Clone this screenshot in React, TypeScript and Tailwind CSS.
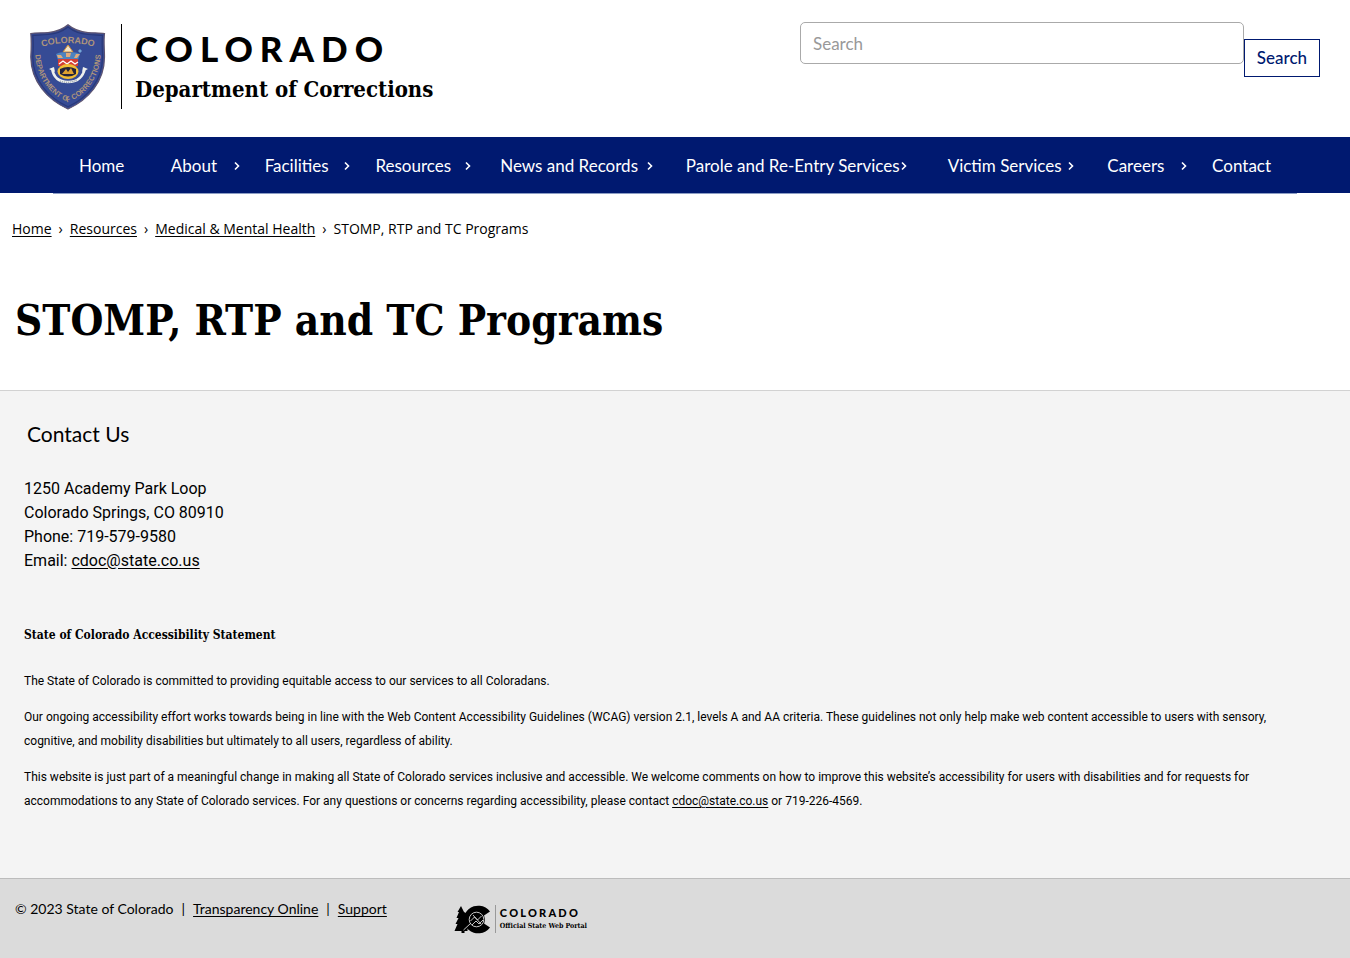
const navItems = [
  { label: 'Home', pad: '' },
  { label: 'About', menu: true, pad: 'pr-6' },
  { label: 'Facilities', menu: true, pad: 'pr-6' },
  { label: 'Resources', menu: true, pad: 'pr-7' },
  { label: 'News and Records', menu: true, pad: 'pr-8' },
  { label: 'Parole and Re-Entry Services', menu: true, pad: 'pr-10' },
  { label: 'Victim Services', menu: true, pad: 'pr-8' },
  { label: 'Careers', menu: true, pad: 'pr-6' },
  { label: 'Contact', pad: '' },
];

function Chevron() {
  return (
    <svg width="8" height="10" viewBox="0 0 8 10" fill="none" stroke="currentColor" strokeWidth="1.6" className="shrink-0" aria-hidden="true">
      <path d="M2 1.5 5.5 5 2 8.5" />
    </svg>
  );
}

function Shield() {
  return (
    <svg width="76" height="86" viewBox="0 0 76 86" className="shrink-0" aria-hidden="true">
      <path
        d="M38 0.8C43 5 51 8 58 8.600C64 9 70 9 74.500 9.500C73.500 17 74.500 25 74.500 33C74.500 58 58 76 38 85C18 76 1 58 0.800 33C1.300 25 1.500 17 0.800 9.500C6 9 12 9 18 8.600C25 8 33 5 38 0.800Z"
        fill="#364b95"
        stroke="#5d536f"
        strokeWidth="1.200"
      />
      <path
        d="M38 3C43 7 51 10 58 10.500C63 11 68 11 72.500 11.300C71.700 18 72.500 26 72.500 33C72.500 57 57 74 38 82.800C19 74 3 57 2.800 33C3.300 26 3.500 18 2.800 11.300C8 11 13 11 18 10.500C25 10 33 7 38 3Z"
        fill="none"
        stroke="#2a3979"
        strokeWidth="1.200"
      />
      <defs>
        <path id="crest-top" d="M8 24Q38 14 68 24" />
        <path id="crest-side" d="M5 24C5 56 22 72 38 78C54 72 71 56 71 24" />
      </defs>
      <g fill="#ae947b" fontFamily="Liberation Sans" fontSize="9" fontWeight="bold">
        <text textAnchor="middle">
          <textPath href="#crest-top" startOffset="50%">COLORADO</textPath>
        </text>
        <text fontSize="7.500" textAnchor="middle">
          <textPath href="#crest-side" startOffset="50%">DEPARTMENT OF CORRECTIONS</textPath>
        </text>
      </g>
      <path d="M38 21 43 28H33Z" fill="#f2e4c4" stroke="#d29036" strokeWidth="1" />
      <path d="M26 30Q31 27 38 29Q45 27 50 30L48 36H28Z" fill="#4d83c0" />
      <path d="M27 31h4l2 3h-5zM36 29h5l-1 4h-4zM46 30h4l-3 4h-3z" fill="#e0ac7c" />
      <path d="M50 25l2 2-2 2-2-2z" fill="#75a7d8" />
      <path d="M28 35H48V42H28Z" fill="#d33e35" />
      <path d="M29 40l4-3 4 3 4-3 4 3 3-2" fill="none" stroke="#fff" strokeWidth="1.300" />
      <ellipse cx="38" cy="47.500" rx="10.500" ry="7.500" fill="#f0bd36" />
      <path d="M30 45Q38 41 46 45V50Q38 55 30 50Z" fill="#25243a" />
      <path d="M32 50l4-5 2 3 3-4 3 6z" fill="#dfa12f" />
      <path d="M22 44Q24 58 38 58Q52 58 55 44" fill="none" stroke="#eef0ed" strokeWidth="2.500" />
      <path d="M19 45l5-2 1 5zM58 45l-5-2-1 5z" fill="#eef0ed" />
      <path d="M30 57Q38 60 47 56" fill="none" stroke="#6d7890" strokeWidth="1" strokeDasharray="1 1" />
    </svg>
  );
}

function PortalMark() {
  return (
    <svg width="38" height="30" viewBox="0 0 38 30" className="shrink-0" aria-hidden="true">
      <path d="M7 1 3.500 7h1.500L2.500 13h2L1.500 19h2L0.500 26h7v2h3v-2h3V9L10 7z" fill="#000" />
      <path
        d="M36 6.500A14.500 13.800 0 1 0 36 22.500L30 18.500A7.500 7.500 0 0 1 30 10.500Z"
        fill="#000"
      />
      <circle cx="23" cy="14.500" r="8" fill="#000" />
      <g fill="none" stroke="#dbdbdb" strokeWidth="0.900">
        <circle cx="22.500" cy="14.500" r="7.300" />
        <path d="M9.500 25 17 18M16.500 16 20.500 12l3 3 4-4M18 20l4-4 3 3 4-4M19 10l8 9" />
      </g>
    </svg>
  );
}

const link = 'underline underline-offset-2';

export default function App() {
  return (
    <div className="min-h-screen bg-white font-['Lato','Liberation_Sans',sans-serif] text-black">
      <header className="flex h-[137px] items-start justify-between px-[30px]">
        <a href="#home" className="flex pt-6" aria-label="Colorado Department of Corrections">
          <Shield />
          <span className="ml-[15px] flex h-[85px] flex-col border-l border-black pl-[13px]">
            <span className="mt-1 text-[35px] leading-[40px] font-black tracking-[0.2em]">COLORADO</span>
            <span className="mt-[5px] font-['DejaVu_Serif_Condensed','DejaVu_Serif',serif] text-[22px] leading-8 font-bold whitespace-nowrap">
              Department of Corrections
            </span>
          </span>
        </a>
        <form className="flex w-[520px] pt-[22px]" onSubmit={(e) => e.preventDefault()}>
          <input
            type="search"
            aria-label="Search"
            placeholder="Search"
            className="h-[42px] min-w-0 flex-1 rounded-[5px] border border-[#aaa] px-3 text-[17px] placeholder:text-[#999]"
          />
          <button type="submit" className="mt-[17px] h-[38px] w-[76px] border border-[#001970] text-[17px] font-medium text-[#001970]">
            Search
          </button>
        </form>
      </header>

      <nav className="bg-[#001970] text-white" aria-label="Main">
        <ul className="ml-[79px] mr-[78px] grid h-14 grid-cols-[92fr_94fr_111fr_125fr_186fr_260fr_160fr_105fr_60fr] items-center pt-px text-[17px]">
          {navItems.map((item) => (
            <li key={item.label} className={item.pad}>
              <a href="#menu" className="flex items-center justify-between whitespace-nowrap">
                {item.label}
                {item.menu && <Chevron />}
              </a>
            </li>
          ))}
        </ul>
      </nav>
      <div className="mx-[53px] h-px bg-[#8c9dc4]" />

      <main>
        <nav aria-label="Breadcrumb" className="px-3 pt-[23px]">
          <ol className="flex gap-[7px] font-['Open_Sans','Noto_Sans',sans-serif] text-[14px] leading-6">
            <li><a href="#home" className={link}>Home</a></li>
            <li aria-hidden="true">›</li>
            <li><a href="#resources" className={link}>Resources</a></li>
            <li aria-hidden="true">›</li>
            <li><a href="#health" className={link}>Medical &amp; Mental Health</a></li>
            <li aria-hidden="true">›</li>
            <li>STOMP, RTP and TC Programs</li>
          </ol>
        </nav>
        <h1 className="px-[15px] pt-[51px] pb-[41px] font-['DejaVu_Serif_Condensed','DejaVu_Serif',serif] text-[42px] leading-[57px] font-bold">
          STOMP, RTP and TC Programs
        </h1>
      </main>

      <footer>
        <section className="border-t border-[#d2d2d2] bg-[#f4f4f4] px-6 pt-[27px] pb-[65px]">
          <h2 className="pl-[3px] text-[21px] leading-8">Contact Us</h2>
          <address className="pt-[27px] font-['Roboto','Liberation_Sans',sans-serif] text-base leading-6 not-italic">
            1250 Academy Park Loop
            <br />
            Colorado Springs, CO 80910
            <br />
            Phone: 719-579-9580
            <br />
            Email: <a href="mailto:cdoc@state.co.us" className={link}>cdoc@state.co.us</a>
          </address>
          <h3 className="pt-[50px] font-['DejaVu_Serif_Condensed','DejaVu_Serif',serif] text-[12px] leading-6 font-bold">
            State of Colorado Accessibility Statement
          </h3>
          <div className="flex flex-col gap-3 pt-[22px] pr-6 font-['Roboto','Liberation_Sans',sans-serif] text-[12px] leading-6">
            <p>The State of Colorado is committed to providing equitable access to our services to all Coloradans.</p>
            <p>
              Our ongoing accessibility effort works towards being in line with the Web Content Accessibility Guidelines (WCAG) version 2.1, levels A and AA
              criteria. These guidelines not only help make web content accessible to users with sensory, cognitive, and mobility disabilities but
              ultimately to all users, regardless of ability.
            </p>
            <p>
              This website is just part of a meaningful change in making all State of Colorado services inclusive and accessible. We welcome comments on
              how to improve this website’s accessibility for users with disabilities and for requests for accommodations to any State of Colorado
              services. For any questions or concerns regarding accessibility, please contact{' '}
              <a href="mailto:cdoc@state.co.us" className={link}>cdoc@state.co.us</a> or 719-226-4569.
            </p>
          </div>
        </section>
        <section className="flex h-20 items-start border-t border-[#bcbcbc] bg-[#dbdbdb] px-[15px] pt-[18px]">
          <p className="flex gap-2 text-sm leading-6">
            <span>© 2023 State of Colorado</span>
            <span>|</span>
            <a href="#transparency" className={link}>Transparency Online</a>
            <span>|</span>
            <a href="#support" className={link}>Support</a>
          </p>
          <a href="#portal" className="mt-2 ml-[67px] flex" aria-label="Colorado Official State Web Portal">
            <PortalMark />
            <span className="ml-[3px] flex h-7 flex-col border-l border-[#999] pl-1">
              <span className="mt-0.5 text-[11px] leading-3 font-black tracking-[0.2em]">COLORADO</span>
              <span className="mt-px font-['DejaVu_Serif_Condensed','DejaVu_Serif',serif] text-[7px] leading-3 font-bold whitespace-nowrap">
                Official State Web Portal
              </span>
            </span>
          </a>
        </section>
      </footer>
    </div>
  );
}
